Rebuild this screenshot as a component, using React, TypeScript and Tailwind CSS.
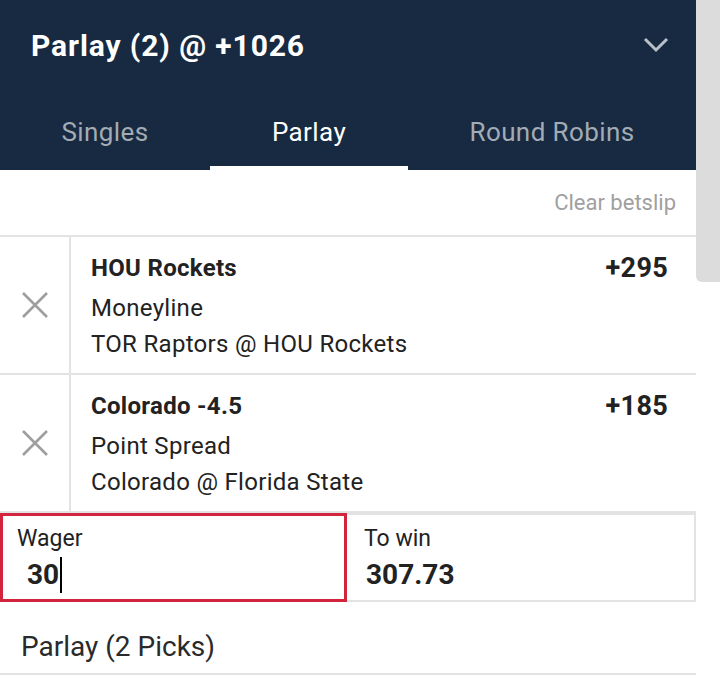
import React from "react";

const bets = [
  { title: "HOU Rockets", odds: "+295", market: "Moneyline", game: "TOR Raptors @ HOU Rockets" },
  { title: "Colorado -4.5", odds: "+185", market: "Point Spread", game: "Colorado @ Florida State" },
];

const CloseIcon = () => (
  <svg width="28" height="26" viewBox="0 0 28 26" fill="none" stroke="#9e9e9e" strokeWidth="2.6">
    <path d="M2 1 L26 25 M26 1 L2 25" />
  </svg>
);

const App: React.FC = () => {
  return (
    <div className="flex w-[720px] h-[677px] overflow-hidden bg-white font-['Roboto',sans-serif] text-[#222]">
      <div className="w-[696px] flex flex-col">
        {/* Header */}
        <div className="bg-[#172a41]">
          <div className="h-[90px] flex items-center justify-between pl-[31px] pr-[27px]">
            <h1 className="text-[30px] font-bold text-white tracking-[0.9px]">Parlay (2) @ +1026</h1>
            <svg width="26" height="16" viewBox="0 0 26 16" fill="none" stroke="#b9c0c8" strokeWidth="3">
              <path d="M2 2 L13 13 L24 2" />
            </svg>
          </div>
          <div className="flex h-[80px] text-[26px] tracking-[0.4px]">
            <div className="w-[210px] flex items-center justify-center pt-[8px] text-[#a3abb4] border-b-4 border-transparent">Singles</div>
            <div className="w-[198px] flex items-center justify-center pt-[8px] text-white border-b-4 border-white">Parlay</div>
            <div className="flex-1 flex items-center justify-center pt-[8px] text-[#a3abb4] border-b-4 border-transparent">Round Robins</div>
          </div>
        </div>

        {/* Clear */}
        <div className="h-[67px] flex items-center justify-end pr-[20px] border-b-2 border-[#e3e3e3]">
          <span className="text-[22px] text-[#a0a0a0]">Clear betslip</span>
        </div>

        {/* Bets */}
        {bets.map((b) => (
          <div key={b.title} className="flex h-[138px] border-b-2 border-[#e3e3e3]">
            <div className="w-[71px] flex items-center justify-center border-r-2 border-[#e3e3e3]">
              <CloseIcon />
            </div>
            <div className="flex-1 pl-[20px] pr-[28px] pt-[13px] text-[24px] leading-[36px] tracking-[0.3px]">
              <div className="flex justify-between">
                <span className="font-bold">{b.title}</span>
                <span className="font-bold text-[27px]">{b.odds}</span>
              </div>
              <div className="mt-1">{b.market}</div>
              <div>{b.game}</div>
            </div>
          </div>
        ))}

        {/* Wager */}
        <div className="flex h-[89px]">
          <div className="w-[347px] border-[3px] border-[#d2253d] pl-[14px] pt-[6px]">
            <div className="text-[23px] leading-[34px]">Wager</div>
            <div className="flex items-center pl-[10px] mt-[1px]">
              <span className="text-[28px] font-bold leading-[30px]">30</span>
              <span className="w-[1.5px] h-[36px] bg-black ml-px"></span>
            </div>
          </div>
          <div className="flex-1 border-2 border-l-0 border-[#e3e3e3] pl-[17px] pt-[7px]">
            <div className="text-[23px] leading-[34px]">To win</div>
            <div className="text-[28px] font-bold leading-[30px] pl-[2px] mt-[4px]">307.73</div>
          </div>
        </div>

        <div className="h-[73px] pt-[31px] pl-[21px] border-b-2 border-[#e3e3e3]">
          <div className="text-[28px] leading-[28px] text-[#2a2a2a]">Parlay (2 Picks)</div>
        </div>
      </div>

      {/* Scrollbar */}
      <div className="w-[24px]">
        <div className="h-[282px] bg-[#dcdcdc] rounded-bl-[6px]"></div>
      </div>
    </div>
  );
};

export default App;
